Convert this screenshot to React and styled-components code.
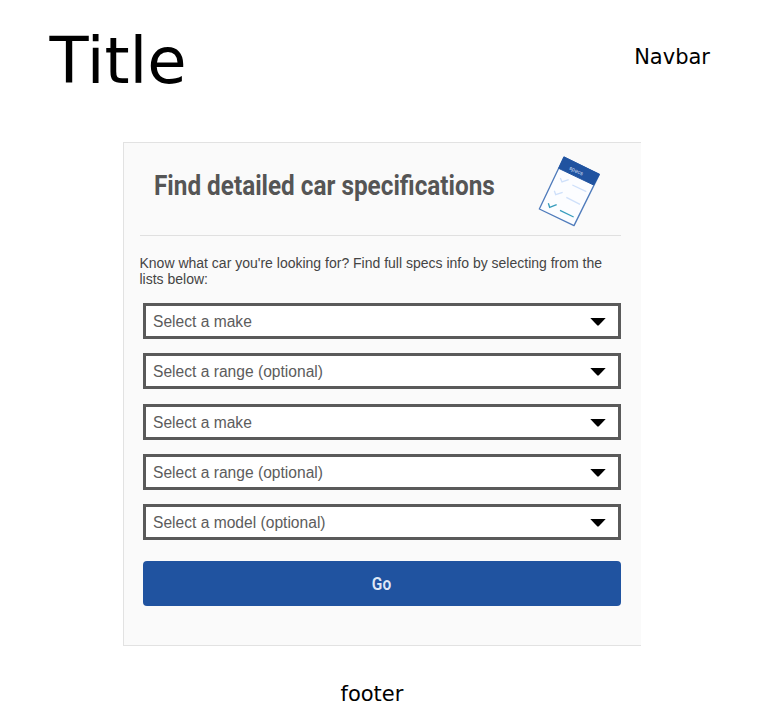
import React from "react";
import styled, { createGlobalStyle } from "styled-components";

const GlobalStyle = createGlobalStyle`
  *, *::before, *::after { box-sizing: border-box; }
  body {
    margin: 0;
    background: #fff;
    font-family: "DejaVu Sans", sans-serif;
    color: #000;
  }
`;

const Page = styled.div`
  display: flex;
  flex-direction: column;
  width: 767px;
  height: 726px;
`;

const Header = styled.header`
  display: flex;
  justify-content: space-between;
  align-items: flex-start;
  height: 142px;
  padding: 24px 57px 0 49.5px;
`;

const Title = styled.h1`
  margin: 0;
  font-size: 64px;
  font-weight: 400;
  line-height: 75px;
`;

const Nav = styled.nav`
  padding-top: 21px;
  font-size: 21px;
  line-height: 25px;
`;

const Card = styled.main`
  display: flex;
  flex-direction: column;
  width: 518px;
  height: 504px;
  margin-left: 123px;
  padding: 0 20px 0 16px;
  background: #fafafa;
  border: 1px solid #e2e2e2;
  border-right: 0;
`;

const CardHeader = styled.div`
  display: flex;
  justify-content: space-between;
  height: 93px;
  padding: 0 16px 0 14px;
  border-bottom: 1px solid #e0e0e0;
`;

const Heading = styled.h2`
  margin: 0;
  padding-top: 25.5px;
  width: 370px;
  font: 700 27px/34px Roboto, sans-serif;
  color: #555;
  white-space: nowrap;
  transform: scaleX(0.9);
  transform-origin: left;
`;

const SpecsIcon = styled.svg`
  flex: none;
  width: 70px;
  height: 80px;
  margin-top: 7px;
`;

const Intro = styled.p`
  margin: 18.5px 0 0 -0.5px;
  font: 14px/16.5px "Liberation Sans", Arial, sans-serif;
  color: #444;
  white-space: nowrap;
`;

const Form = styled.form`
  display: flex;
  flex-direction: column;
  margin: 15.5px 0 0 3px;
`;

const FieldGroup = styled.div`
  display: grid;
  row-gap: 14px;
  margin-bottom: ${(p) => p.$after}px;
`;

const Field = styled.div`
  display: flex;
  justify-content: space-between;
  align-items: center;
  height: 36px;
  padding: 0 12px 0 7px;
  background: #fff;
  border: 3px solid #5a5a5a;
`;

const FieldLabel = styled.span`
  padding-top: 1px;
  font: 16px/20px "Liberation Sans", Arial, sans-serif;
  color: #5c5c5c;
  transform: scaleX(0.975);
  transform-origin: left;
`;

const Caret = styled.svg`
  width: 16px;
  height: 8px;
  margin-top: 1px;
`;

const GoButton = styled.button`
  height: 45px;
  padding: 0;
  border: 0;
  border-radius: 4px;
  background: #2053a0;
  color: #dfe8f6;
  font: 600 18px/45px Roboto, sans-serif;
`;

const ButtonText = styled.span`
  display: inline-block;
  transform: translateX(-0.7px) scaleX(0.86);
`;

const Footer = styled.footer`
  padding: 36px 0 0 340.5px;
  font-size: 21px;
  line-height: 25px;
`;

function Checklist() {
  return (
    <SpecsIcon viewBox="0 0 210 240" fill="none">
      <path d="M87 21L193 73L117 227L13 177Z" fill="#fcfdff" stroke="#4f7bbb" strokeWidth="4" strokeLinejoin="round" />
      <path d="M87 21L193 73L176 105L71 55Z" fill="#2053a0" stroke="#2053a0" strokeWidth="3" strokeLinejoin="round" />
      <text x="101" y="58" transform="rotate(25 101 58)" fontSize="17" fontFamily="Roboto, sans-serif" fill="#c6d6ee">specs</text>
      <g strokeWidth="4" stroke="#cfe0fa">
        <path d="M76 84L81 96L101 89M112 105L154 125" />
        <path d="M58 122L62 134L83 127M94 142L135 163" />
        <path d="M40 160L44 172L65 164M75 181L116 201" stroke="#389dbd" />
      </g>
    </SpecsIcon>
  );
}

function SelectField({ label }) {
  return (
    <Field>
      <FieldLabel>{label}</FieldLabel>
      <Caret viewBox="0 0 16 8">
        <path d="M0.3 0H15.7L8.6 7.6H7.4Z" fill="#000" />
      </Caret>
    </Field>
  );
}

export default function App() {
  return (
    <>
      <GlobalStyle />
      <Page>
        <Header>
          <Title>Title</Title>
          <Nav>Navbar</Nav>
        </Header>
        <Card>
          <CardHeader>
            <Heading>Find detailed car specifications</Heading>
            <Checklist />
          </CardHeader>
          <Intro>
            Know what car you're looking for? Find full specs info by selecting from the
            <br />
            lists below:
          </Intro>
          <Form>
            <FieldGroup $after={15}>
              <SelectField label="Select a make" />
              <SelectField label="Select a range (optional)" />
            </FieldGroup>
            <FieldGroup $after={21}>
              <SelectField label="Select a make" />
              <SelectField label="Select a range (optional)" />
              <SelectField label="Select a model (optional)" />
            </FieldGroup>
            <GoButton type="button">
              <ButtonText>Go</ButtonText>
            </GoButton>
          </Form>
        </Card>
        <Footer>footer</Footer>
      </Page>
    </>
  );
}
